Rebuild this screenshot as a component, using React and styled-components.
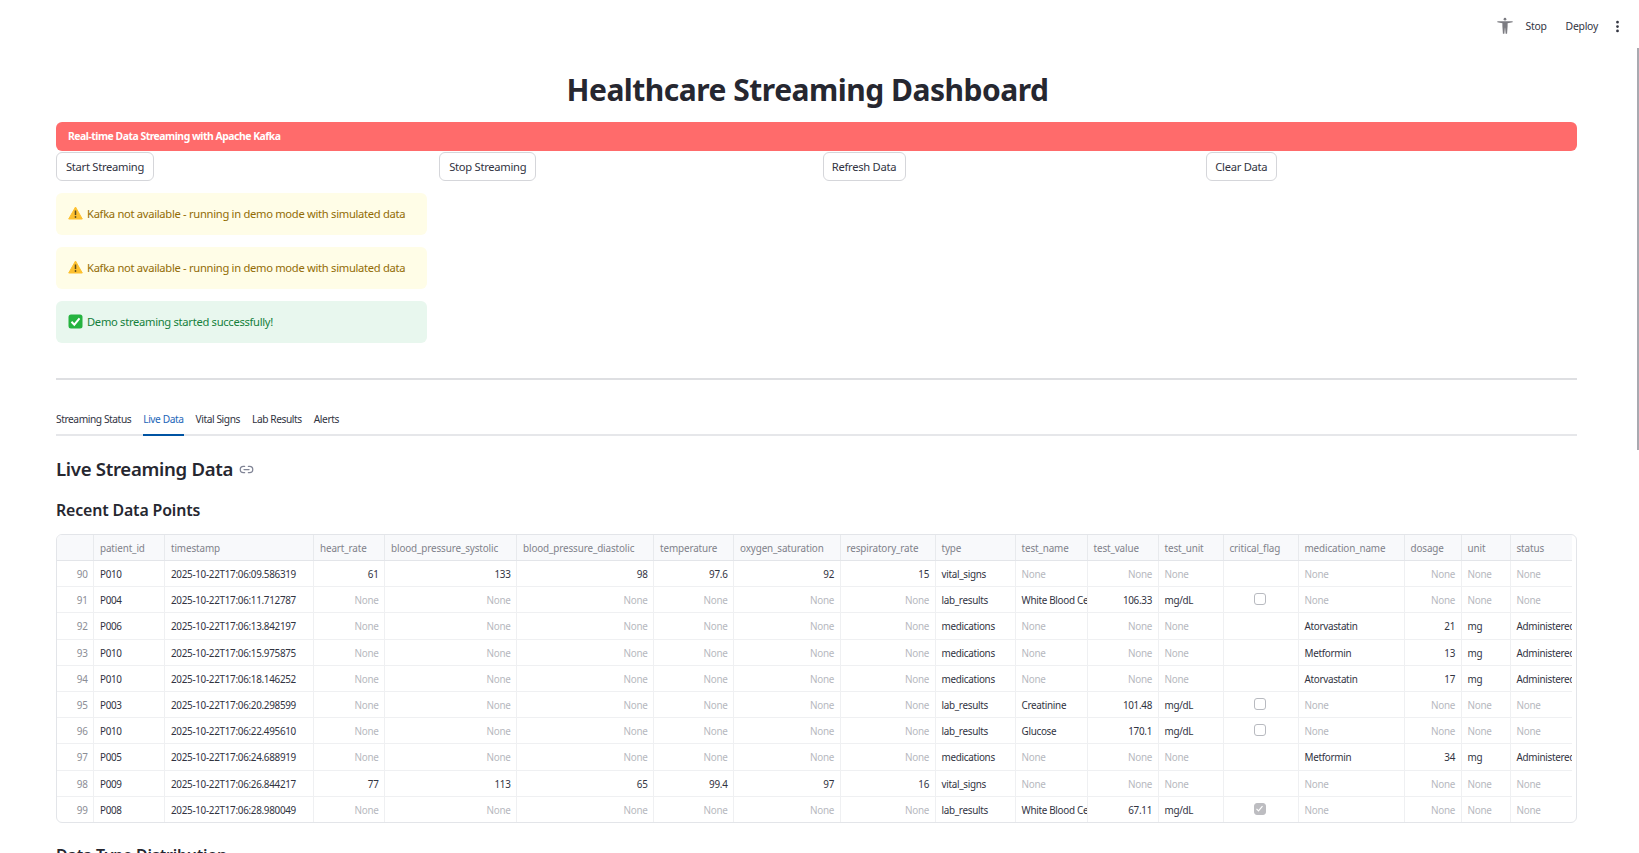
import React from "react";
import styled, { createGlobalStyle } from "styled-components";
import { Link2, EllipsisVertical } from "lucide-react";

const FONT = `"Noto Sans", "Open Sans", sans-serif`;

const GlobalStyle = createGlobalStyle`
  html, body {
    margin: 0;
    height: 853px;
    overflow: hidden;
    background: #fff;
    font-family: ${FONT};
    color: #31333f;
  }
  * { box-sizing: border-box; }
`;

const Page = styled.div`
  position: relative;
  height: 853px;
  overflow: hidden;
`;

const ScrollThumb = styled.div`
  position: absolute;
  right: 0;
  top: 48px;
  width: 2px;
  height: 402px;
  background: #a9a9b0;
`;

const Toolbar = styled.header`
  height: 52px;
  display: flex;
  align-items: center;
  justify-content: flex-end;
  padding-right: 14px;
  font-size: 10.4px;
  letter-spacing: -0.25px;
  color: #31333f;
`;

const ToolbarItem = styled.span`
  margin-left: ${(p) => p.$gap}px;
  display: flex;
  align-items: center;
`;

const Main = styled.main`
  padding: 0 62px 0 56px;
`;

const Title = styled.h1`
  margin: 16px 0 10px;
  padding-right: 18px;
  height: 44px;
  line-height: 44px;
  text-align: center;
  font-size: 30px;
  font-weight: 700;
  letter-spacing: -0.5px;
  color: #262730;
`;

const Banner = styled.div`
  height: 29px;
  line-height: 29px;
  padding-left: 12px;
  border-radius: 6px;
  background: #ff6b6b;
  color: #fff;
  font-size: 10.4px;
  font-weight: 700;
  letter-spacing: -0.48px;
`;

const Columns = styled.div`
  display: grid;
  grid-template-columns: repeat(4, 1fr);
  column-gap: 12px;
  margin-top: 1px;
`;

const Column = styled.div`
  display: flex;
  flex-direction: column;
  align-items: flex-start;
  gap: 12px;
`;

const Button = styled.button`
  height: 29px;
  width: ${(p) => p.$w}px;
  padding: 0 0 1px;
  border: 1px solid #d5d6da;
  border-radius: 6px;
  background: #fff;
  color: #31333f;
  font-family: ${FONT};
  font-size: 11.2px;
  letter-spacing: -0.28px;
`;

const Alert = styled.div`
  width: 100%;
  height: 42px;
  display: flex;
  align-items: center;
  gap: 4px;
  padding: 0 0 2px 12px;
  border-radius: 6px;
  font-size: 11.2px;
  letter-spacing: -0.3px;
  background: ${(p) => (p.$kind === "success" ? "#e8f7ee" : "#fffde7")};
  color: ${(p) => (p.$kind === "success" ? "#14803c" : "#926c05")};
`;

const Divider = styled.hr`
  margin: 35px 0 0;
  border: 0;
  height: 2px;
  background: #dedfe2;
`;

const TabBar = styled.nav`
  margin-top: 25px;
  height: 31px;
  display: flex;
  gap: 12px;
  border-bottom: 2px solid #e6e7ea;
`;

const Tab = styled.div`
  height: 31px;
  padding-top: 7px;
  font-size: 10.2px;
  letter-spacing: -0.42px;
  color: ${(p) => (p.$active ? "#1c66b8" : "#31333f")};
  border-bottom: 2px solid ${(p) => (p.$active ? "#0054a3" : "transparent")};
`;

const SectionTitle = styled.h2`
  margin: 19px 0 0;
  height: 28px;
  line-height: 28px;
  display: flex;
  align-items: center;
  gap: 6px;
  font-size: 18.6px;
  font-weight: 600;
  letter-spacing: -0.3px;
  color: #262730;
  svg { color: #808495; }
`;

const SubTitle = styled.h3`
  margin: ${(p) => p.$top}px 0 0;
  height: 24px;
  line-height: 24px;
  font-size: 15.9px;
  font-weight: 600;
  letter-spacing: -0.15px;
  color: #262730;
`;

const TableFrame = styled.div`
  margin-top: 12px;
  padding-right: 4px;
  height: 289px;
  border: 1px solid #e3e5e9;
  border-radius: 6px;
  overflow: hidden;
`;

const TableViewport = styled.div`
  height: 100%;
  overflow: hidden;
`;

const GRID = "37px 71px 149px 71px 132px 137px 80px 106.5px 95px 80px 72px 71px 65px 75px 106px 57px 49px 90px";

const HeaderRow = styled.div`
  display: grid;
  grid-template-columns: ${GRID};
  height: 26px;
  background: #f8f9fb;
  border-bottom: 1px solid #e3e5e9;
`;

const DataRow = styled.div`
  display: grid;
  grid-template-columns: ${GRID};
  height: 26.2px;
  border-bottom: 1px solid #eff0f2;
  &:last-child { border-bottom: 0; }
`;

const HeaderCell = styled.div`
  padding: 0 6px;
  line-height: 26px;
  font-size: 9.9px;
  letter-spacing: -0.12px;
  white-space: nowrap;
  overflow: hidden;
  color: #7f818a;
  border-right: 1px solid #e8eaed;
`;

const Cell = styled.div`
  padding: 0 ${(p) => (p.$clip ? 0 : 5.5)}px 0 6px;
  line-height: 26px;
  font-size: 9.9px;
  letter-spacing: -0.3px;
  white-space: nowrap;
  overflow: hidden;
  text-align: ${(p) => (p.$right ? "right" : "left")};
  color: ${(p) => (p.$none ? "#b6b8be" : p.$index ? "#8b8d95" : "#31333f")};
  border-right: 1px solid #eff0f2;
`;

const CheckCell = styled(Cell)`
  display: flex;
  justify-content: center;
  padding: 6px 2px 0 0;
`;

const CheckBox = styled.span`
  width: 12px;
  height: 12px;
  border-radius: 3px;
  display: flex;
  align-items: center;
  justify-content: center;
  border: 1px solid ${(p) => (p.$checked ? "#bdbdc1" : "#b8bac0")};
  background: ${(p) => (p.$checked ? "#bdbdc1" : "#fff")};
`;

const standing = (
  <svg width="18" height="18" viewBox="0 0 20 20" fill="#7c7c82">
    <circle cx="10" cy="2.4" r="1.5" />
    <path d="M1.5 4.6h17v1.2l-5.6 1.2v3.2l-.6 8.3h-1.6l-.6-6.5h-.2l-.6 6.5H7.7l-.6-8.3V7L1.5 5.8z" />
  </svg>
);

const warnIcon = (
  <svg width="15" height="14" viewBox="0 0 15 14">
    <path d="M7.5 1L14.3 13H.7z" fill="#fdc02f" stroke="#fdc02f" strokeLinejoin="round" />
    <path d="M7.5 4.5v4.6" stroke="#5b4a1c" strokeWidth="1.5" />
    <circle cx="7.5" cy="11" r=".9" fill="#5b4a1c" />
  </svg>
);

const okIcon = (
  <svg width="15" height="15" viewBox="0 0 15 15">
    <rect x=".5" y=".5" width="14" height="14" rx="2.5" fill="#25b33f" />
    <path d="M3.5 7.8l2.8 2.9 5.2-6.4" fill="none" stroke="#fff" strokeWidth="2" />
  </svg>
);

const tick = (
  <svg width="9" height="9" viewBox="0 0 9 9">
    <path d="M1.5 4.8l2 2 4-4.6" fill="none" stroke="#fff" strokeWidth="1.2" />
  </svg>
);

const headers = [
  "", "patient_id", "timestamp", "heart_rate", "blood_pressure_systolic", "blood_pressure_diastolic",
  "temperature", "oxygen_saturation", "respiratory_rate", "type", "test_name", "test_value", "test_unit",
  "critical_flag", "medication_name", "dosage", "unit", "status",
];

const N = null;
const vitals = (a, b, c, d, e, f) => ({ num: [a, b, c, d, e, f], type: "vital_signs", lab: [N, N, N], flag: "", med: [N, N, N, N] });
const lab = (name, value, checked) => ({
  num: [N, N, N, N, N, N], type: "lab_results", lab: [name, value, "mg/dL"], flag: checked ? "on" : "off", med: [N, N, N, N],
});
const med = (name, dose) => ({
  num: [N, N, N, N, N, N], type: "medications", lab: [N, N, N], flag: "", med: [name, dose, "mg", "Administered"],
});

const rows = [
  ["90", "P010", "2025-10-22T17:06:09.586319", vitals(61, 133, 98, 97.6, 92, 15)],
  ["91", "P004", "2025-10-22T17:06:11.712787", lab("White Blood Cells", 106.33, false)],
  ["92", "P006", "2025-10-22T17:06:13.842197", med("Atorvastatin", 21)],
  ["93", "P010", "2025-10-22T17:06:15.975875", med("Metformin", 13)],
  ["94", "P010", "2025-10-22T17:06:18.146252", med("Atorvastatin", 17)],
  ["95", "P003", "2025-10-22T17:06:20.298599", lab("Creatinine", 101.48, false)],
  ["96", "P010", "2025-10-22T17:06:22.495610", lab("Glucose", 170.1, false)],
  ["97", "P005", "2025-10-22T17:06:24.688919", med("Metformin", 34)],
  ["98", "P009", "2025-10-22T17:06:26.844217", vitals(77, 113, 65, 99.4, 97, 16)],
  ["99", "P008", "2025-10-22T17:06:28.980049", lab("White Blood Cells", 67.11, true)],
];

const Value = ({ v, right, clip }) => (
  <Cell $right={right} $clip={clip} $none={v === N}>
    {v === N ? "None" : v}
  </Cell>
);

const App = () => (
  <Page>
    <GlobalStyle />
    <ScrollThumb />
    <Toolbar>
      <ToolbarItem $gap={0}>{standing}</ToolbarItem>
      <ToolbarItem $gap={11}>Stop</ToolbarItem>
      <ToolbarItem $gap={19}>Deploy</ToolbarItem>
      <ToolbarItem $gap={12}>
        <EllipsisVertical size={15} strokeWidth={2.4} />
      </ToolbarItem>
    </Toolbar>
    <Main>
      <Title>Healthcare Streaming Dashboard</Title>
      <Banner>Real-time Data Streaming with Apache Kafka</Banner>
      <Columns>
        <Column>
          <Button $w={98}>Start Streaming</Button>
          <Alert>{warnIcon}Kafka not available - running in demo mode with simulated data</Alert>
          <Alert>{warnIcon}Kafka not available - running in demo mode with simulated data</Alert>
          <Alert $kind="success">{okIcon}Demo streaming started successfully!</Alert>
        </Column>
        <Column>
          <Button $w={97}>Stop Streaming</Button>
        </Column>
        <Column>
          <Button $w={83}>Refresh Data</Button>
        </Column>
        <Column>
          <Button $w={71}>Clear Data</Button>
        </Column>
      </Columns>
      <Divider />
      <TabBar>
        <Tab>Streaming Status</Tab>
        <Tab $active>Live Data</Tab>
        <Tab>Vital Signs</Tab>
        <Tab>Lab Results</Tab>
        <Tab>Alerts</Tab>
      </TabBar>
      <SectionTitle>
        Live Streaming Data
        <Link2 size={15} />
      </SectionTitle>
      <SubTitle $top={15}>Recent Data Points</SubTitle>
      <TableFrame>
        <TableViewport>
          <HeaderRow>
            {headers.map((h) => (
              <HeaderCell key={h}>{h}</HeaderCell>
            ))}
          </HeaderRow>
          {rows.map(([idx, pid, ts, r]) => (
            <DataRow key={idx}>
              <Cell $right $index>{idx}</Cell>
              <Cell>{pid}</Cell>
              <Cell>{ts}</Cell>
              {r.num.map((v, i) => (
                <Value key={i} v={v} right />
              ))}
              <Cell>{r.type}</Cell>
              <Value v={r.lab[0]} clip />
              <Value v={r.lab[1]} right />
              <Value v={r.lab[2]} />
              <CheckCell>
                {r.flag && <CheckBox $checked={r.flag === "on"}>{r.flag === "on" && tick}</CheckBox>}
              </CheckCell>
              <Value v={r.med[0]} />
              <Value v={r.med[1]} right />
              <Value v={r.med[2]} />
              <Value v={r.med[3]} />
            </DataRow>
          ))}
        </TableViewport>
      </TableFrame>
      <SubTitle $top={20}>Data Type Distribution</SubTitle>
    </Main>
  </Page>
);

export default App;
